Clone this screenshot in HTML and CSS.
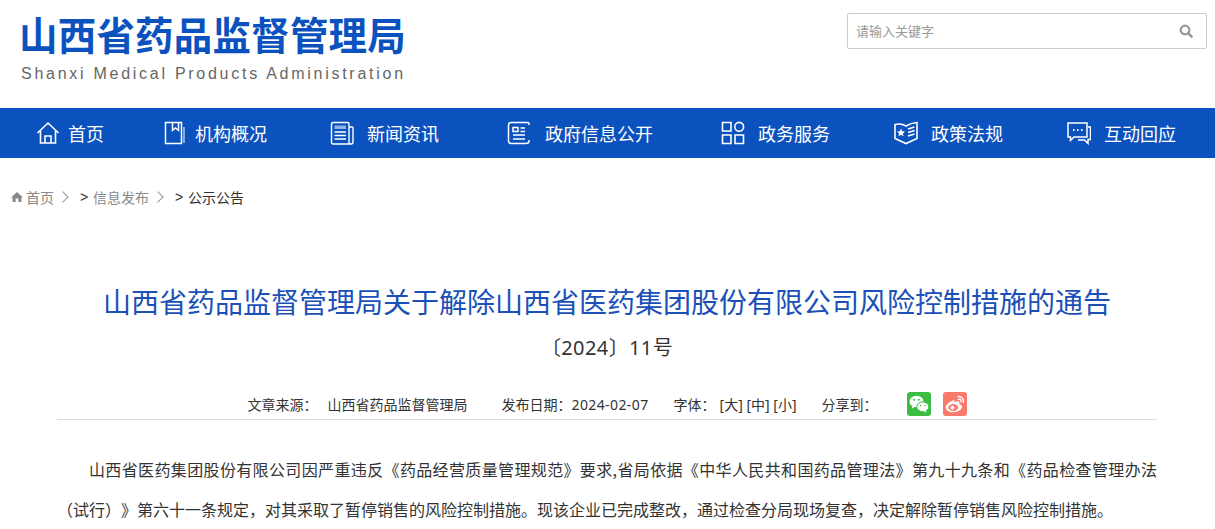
FILE: index.html
```html
<!DOCTYPE html>
<html lang="zh-CN">
<head>
  <meta charset="utf-8">
  <title>山西省药品监督管理局</title>
  <link rel="stylesheet" href="styles.css">
</head>
<body>
  <div class="header">
    <div class="logo">
      <div class="logo-cn">山西省药品监督管理局</div>
      <div class="logo-en">Shanxi Medical Products Administration</div>
    </div>
    <form class="search">
      <input type="text" class="search-input" placeholder="请输入关键字">
      <svg class="search-icon" viewBox="0 0 14 14" width="14" height="14">
        <circle cx="6" cy="6" r="4.3" fill="none" stroke="#999" stroke-width="2.2"/>
        <path d="M9.2 9.2 L12.6 12.6" stroke="#999" stroke-width="2.6" stroke-linecap="round"/>
      </svg>
    </form>
  </div>

  <div class="nav">
    <a class="nav-item nav-tight">
      <svg class="nav-icon" viewBox="0 0 24 24" width="24" height="24" fill="none" stroke="#fff" stroke-width="1.6">
        <path d="M1.5 12 L12 2 L22.5 12 M4.5 10 V22 H19.5 V10 M9 22 V15 H15 V22"/>
      </svg>
      首页
    </a>
    <a class="nav-item nav-tight">
      <svg class="nav-icon" viewBox="0 0 24 24" width="24" height="24" fill="none" stroke="#fff" stroke-width="1.5">
        <path d="M2.5 1.5 H18.5 V22.5 H2.5 Z M9.5 2 V9.5 L12.5 7 L15.5 9.5 V2"/>
        <path d="M21 6 V22" stroke-width="1"/>
      </svg>
      机构概况
    </a>
    <a class="nav-item">
      <svg class="nav-icon" viewBox="0 0 24 24" width="24" height="24" fill="none" stroke="#fff" stroke-width="1.4">
        <path d="M19 6 H22 Q23 6 23 7 V21 Q23 23 21 23 H3 Q1.5 23 1.5 21 V3 Q1.5 1.5 3 1.5 H17.5 Q19 1.5 19 3 V21 Q19 23 21 23"/>
        <path d="M4.5 11 H16 M4.5 14.5 H16 M4.5 18 H16"/>
        <path d="M4.5 4.5 H16 V8 H4.5 Z" fill="#fff" fill-opacity=".55" stroke="none"/>
      </svg>
      新闻资讯
    </a>
    <a class="nav-item nav-wide">
      <svg class="nav-icon" viewBox="0 0 24 24" width="24" height="24" fill="none" stroke="#fff" stroke-width="1.5">
        <path d="M22 4 V3 Q22 1.5 20 1.5 H4 Q1.5 1.5 1.5 4 V20 Q1.5 22.5 4 22.5 H19 Q22 22.5 22 20 V19"/>
        <path d="M6 6.5 H11 V10.5 H6 Z M13.5 7 H18 M13.5 10.5 H18 M6 14 H18 M6 18 H18"/>
      </svg>
      政府信息公开
    </a>
    <a class="nav-item">
      <svg class="nav-icon" viewBox="0 0 24 24" width="24" height="24" fill="none" stroke="#fff" stroke-width="1.6">
        <path d="M1.5 1.5 H10 V10 H1.5 Z M1.5 14 H10 V22.5 H1.5 Z M14 14 H22.5 V22.5 H14 Z"/>
        <circle cx="18.2" cy="5.8" r="4.4"/>
      </svg>
      政务服务
    </a>
    <a class="nav-item">
      <svg class="nav-icon" viewBox="0 0 24 24" width="24" height="24" fill="none" stroke="#fff" stroke-width="1.6">
        <path d="M1 3.5 Q7 2 12 5 Q17 2 23 1.5 V17.5 L12 22.5 L1 17.5 Z"/>
        <path d="M7 7.5 L8.2 10.2 L11 10.5 L8.9 12.4 L9.6 15.2 L7 13.7 L4.4 15.2 L5.1 12.4 L3 10.5 L5.8 10.2 Z" fill="#fff" stroke="none"/>
        <path d="M14 8 L20.5 6 M14 11.5 L20.5 9.5 M14 15 L20.5 13" stroke-width="1.4"/>
      </svg>
      政策法规
    </a>
    <a class="nav-item">
      <svg class="nav-icon" viewBox="0 0 24 24" width="24" height="24" fill="none" stroke="#fff" stroke-width="1.5">
        <path d="M1 2 H20 V16 H7 L3.5 19.5 V16 H1 Z"/>
        <path d="M21 6 H23.5 V18.5 H21 V22.5 L17.5 19 H11"/>
        <path d="M6 9 H7.5 M10 9 H11.5 M14 9 H15.5" stroke-width="2"/>
      </svg>
      互动回应
    </a>
  </div>

  <div class="crumbs">
    <svg class="crumb-home" viewBox="0 0 12 12" width="12" height="12">
      <path d="M6 1 L12 6.4 H10.4 V11 H7.4 V7.6 H4.6 V11 H1.6 V6.4 H0 Z" fill="#888"/>
    </svg>
    <span class="crumb-link">首页</span>
    <span class="crumb-arrow"></span>
    <span class="crumb-gt">&gt;</span>
    <span class="crumb-link">信息发布</span>
    <span class="crumb-arrow"></span>
    <span class="crumb-gt">&gt;</span>
    <span class="crumb-now">公示公告</span>
  </div>

  <div class="article">
    <h1 class="title">山西省药品监督管理局关于解除山西省医药集团股份有限公司风险控制措施的通告</h1>
    <div class="doc-no">〔2024〕11号</div>
    <div class="meta">
      <span class="meta-label">文章来源：</span>
      <span class="meta-source">山西省药品监督管理局</span>
      <span class="meta-date">发布日期：<span class="meta-num">2024-02-07</span></span>
      <span class="meta-label">字体：</span>
      <span class="meta-size">[大] [中] [小]</span>
      <span class="meta-share">分享到：</span>
      <span class="share wechat">
        <svg viewBox="0 0 24 24" width="24" height="24">
          <ellipse cx="9.5" cy="9.5" rx="7" ry="5.8" fill="#fff"/>
          <path d="M5.5 13 L4.8 16.5 L8.5 14.5 Z" fill="#fff"/>
          <ellipse cx="15.8" cy="14.8" rx="6" ry="4.9" fill="#fff" stroke="#3bbd42" stroke-width="1"/>
          <path d="M18.5 18 L19.6 20.6 L16.5 19 Z" fill="#fff"/>
          <circle cx="7.2" cy="7.8" r="1" fill="#3bbd42"/>
          <circle cx="11.8" cy="7.8" r="1" fill="#3bbd42"/>
          <circle cx="13.6" cy="13.6" r=".8" fill="#3bbd42"/>
          <circle cx="18" cy="13.6" r=".8" fill="#3bbd42"/>
        </svg>
      </span>
      <span class="share weibo">
        <svg viewBox="0 0 24 24" width="24" height="24">
          <path d="M10 8.5 C5.5 10 2.5 13 2.8 15.8 C3.2 19 7 20.6 11 20.2 C15.5 19.8 19 17.4 19 14.8 C19 13 17.2 12.4 16.2 12 C16.8 10.6 16.4 9.2 14.6 9.2 C13.4 9.2 12.2 9.8 11.4 10.2 C11.8 8.6 11.2 8 10 8.5 Z" fill="#fff"/>
          <ellipse cx="10.2" cy="15.6" rx="5" ry="3.5" fill="#f97a6a"/>
          <circle cx="9.4" cy="15.8" r="2" fill="#fff"/>
          <path d="M15 4.5 C18.5 4.2 21 6.8 20.3 10.4 M15.4 7.2 C17.2 7 18.3 8.2 18 9.9" fill="none" stroke="#fff" stroke-width="1.4" stroke-linecap="round"/>
        </svg>
      </span>
    </div>
    <div class="content">
      <p>山西省医药集团股份有限公司因严重违反《药品经营质量管理规范》要求,省局依据《中华人民共和国药品管理法》第九十九条和《药品检查管理办法（试行）》第六十一条规定，对其采取了暂停销售的风险控制措施。现该企业已完成整改，通过检查分局现场复查，决定解除暂停销售风险控制措施。</p>
    </div>
  </div>
</body>
</html>
```

FILE: styles.css
```css
html, body {
  margin: 0;
  padding: 0;
  height: 529px;
  overflow: hidden;
}

body {
  font-family: "Noto Sans", "Noto Sans CJK SC", sans-serif;
  background-color: #fff;
  color: #333;
  text-spacing-trim: space-all;
}

.header {
  height: 108px;
  display: flex;
  justify-content: space-between;
  align-items: flex-start;
  padding: 0 8px 0 19px;
  box-sizing: border-box;
}

.logo-cn {
  margin-top: 8px;
  font-family: "Noto Sans CJK SC", sans-serif;
  font-size: 38.5px;
  line-height: 50px;
  letter-spacing: .2px;
  font-weight: 700;
  color: #0b52bf;
  white-space: nowrap;
}

.logo-en {
  margin-top: 6px;
  padding-left: 2px;
  font-family: "Liberation Sans", sans-serif;
  font-size: 16px;
  line-height: 20px;
  letter-spacing: 2.73px;
  color: #666;
  white-space: nowrap;
}

.search {
  width: 360px;
  height: 36px;
  margin-top: 13px;
  display: flex;
  align-items: center;
  box-sizing: border-box;
  border: 1px solid #ccc;
  border-radius: 2px;
}

.search-input {
  flex: 1;
  min-width: 0;
  height: 100%;
  padding: 0 8px 2px;
  border: none;
  outline: none;
  background: none;
  font-family: "Noto Sans CJK SC", sans-serif;
  font-size: 13px;
}

.search-input::placeholder {
  color: #999;
}

.search-icon {
  margin: 0 13px 0 0;
}

.nav {
  height: 50px;
  padding-left: 36px;
  display: grid;
  grid-template-columns: 127px 167px 177px 214px 173px 173px 1fr;
  align-items: center;
  background-color: #0b52bf;
}

.nav-item {
  display: flex;
  align-items: center;
  gap: 13px;
  font-family: "Noto Sans CJK SC", sans-serif;
  font-size: 18px;
  color: #fff;
  white-space: nowrap;
}

.nav-icon {
  flex: none;
}

.nav-tight {
  gap: 8px;
}

.nav-wide {
  gap: 14px;
}

.crumbs {
  display: flex;
  align-items: center;
  height: 20px;
  margin-top: 29px;
  padding-left: 11px;
  font-size: 14px;
  font-family: "Noto Sans CJK SC", sans-serif;
}

.crumb-home {
  margin-right: 3px;
}

.crumb-link {
  color: #888;
}

.crumb-now {
  color: #333;
}

.crumb-arrow {
  width: 7px;
  height: 7px;
  margin: 0 13px 0 5px;
  border-top: 1px solid #999;
  border-right: 1px solid #999;
  transform: rotate(45deg);
}

.crumb-gt {
  width: 13px;
  color: #333;
  font-family: "Liberation Sans", sans-serif;
}

.article {
  margin: 0 58px 0 57px;
}

.title {
  margin: 74px 0 0;
  font-family: "Noto Sans CJK SC", sans-serif;
  font-size: 28px;
  line-height: 40px;
  font-weight: 400;
  text-align: center;
  color: #1a50b8;
  white-space: nowrap;
}

.doc-no {
  margin-top: 12px;
  font-size: 20px;
  line-height: 30px;
  letter-spacing: .4px;
  text-align: center;
  color: #333;
}

.meta {
  display: flex;
  justify-content: center;
  align-items: center;
  height: 24px;
  margin-top: 29px;
  padding-bottom: 3px;
  border-bottom: 1px solid #ddd;
  font-size: 14px;
  white-space: nowrap;
}

.meta-source {
  margin: 0 34px 0 10px;
}

.meta-num {
  letter-spacing: .4px;
}

.meta-date {
  margin-right: 25px;
}

.meta-size {
  margin: 0 25px 0 4px;
}

.meta-share {
  margin-right: 29px;
}

.share {
  width: 24px;
  height: 24px;
  margin-right: 12px;
  display: block;
  border-radius: 3px;
}

.share:last-child {
  margin-right: 0;
}

.wechat {
  background-color: #3bbd42;
}

.weibo {
  background-color: #f97a6a;
}

.content {
  margin-top: 29px;
  font-family: "Noto Sans CJK SC", sans-serif;
  font-size: 16px;
  line-height: 40px;
  color: #333;
}

.content p {
  margin: 0;
  text-align: justify;
  text-indent: 2em;
}
```
